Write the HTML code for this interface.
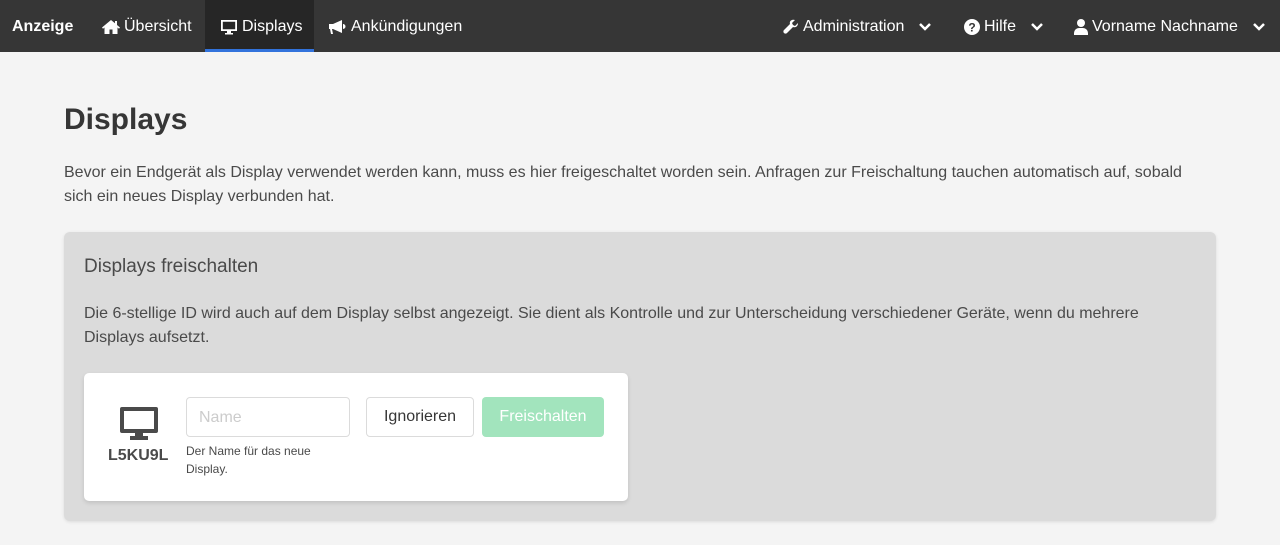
<!DOCTYPE html>
<html><head><meta charset="utf-8"><style>
*{box-sizing:border-box;margin:0;padding:0}
body{width:1280px;height:545px;background:#f4f4f4;font-family:"Liberation Sans",sans-serif;color:#363636;overflow:hidden}
nav{height:52px;background:#363636;color:#fff;position:relative;font-size:16px}
nav .it{position:absolute;top:0;height:52px;display:flex;align-items:center;gap:4px;padding-top:2px}
nav .act{background:#262626;border-bottom:3px solid #3273dc;padding-top:5px}
nav svg{fill:#fff}
nav .ch{margin-left:10px;fill:none;stroke:#fff;stroke-width:2.5}
h1{position:absolute;left:64px;top:103px;font-size:30px;font-weight:bold;color:#363636}
.p{position:absolute;left:64px;top:161px;width:1150px;font-size:16px;line-height:24px;color:#4a4a4a}
.box{position:absolute;left:64px;top:232px;width:1152px;height:289px;background:#dbdbdb;border-radius:6px;box-shadow:0 1px 3px rgba(0,0,0,.1)}
.box h2{position:absolute;left:20px;top:24px;font-size:19px;font-weight:normal;color:#4a4a4a}
.box .d{position:absolute;left:20px;top:70px;width:1100px;font-size:16px;line-height:24px;color:#4a4a4a}
.card{position:absolute;left:20px;top:141px;width:544px;height:128px;background:#fff;border-radius:5px;box-shadow:0 2px 4px rgba(0,0,0,.12)}
.inp{position:absolute;left:102px;top:24px;width:164px;height:40px;border:1px solid #dbdbdb;border-radius:4px;font-size:16px;color:#ccc;padding:11px 12px;line-height:18px}
.btn{position:absolute;top:24px;height:40px;border-radius:4px;font-size:16px;line-height:40px;text-align:center}
</style></head><body>
<nav>
<div class="it" style="left:12px;font-weight:bold">Anzeige</div>
<div class="it" style="left:102px"><svg width="18" height="16" viewBox="0 0 18 16"><path d="M9 1L0 8.5l1 1.2L2.5 8.5V15h5v-4.5h3V15h5V8.5l1.5 1.2 1-1.2-3-2.5V2h-2v2.3z"/></svg>Übersicht</div>
<div class="it act" style="left:205px;width:109px;padding-left:15px"><svg width="18" height="16" viewBox="0 0 18 16"><path d="M1 1h16v11H11v2h2v1.5H5V14h2v-2H1zM2.8 2.8v7.4h12.4V2.8z"/></svg>Displays</div>
<div class="it" style="left:329px"><svg width="18" height="16" viewBox="0 0 18 16"><path d="M0 5h4l9-4v13l-9-4H3l1 5H2L1 10H0zM14 5a2 2 0 010 5z"/></svg>Ankündigungen</div>
<div class="it" style="left:783px"><svg width="16" height="16" viewBox="0 0 16 16"><path d="M15 4l-3 3-2-1-1-2 3-3c-3-1-6 1-5 4L1 11a1.5 1.5 0 003 3l6-6c3 1 5-1 5-4z"/></svg>Administration<svg class="ch" width="14" height="10" viewBox="0 0 14 10"><path d="M2 2l5 5 5-5"/></svg></div>
<div class="it" style="left:964px"><svg width="16" height="16" viewBox="0 0 16 16"><circle cx="8" cy="8" r="8"/><text x="8" y="12.5" font-size="12" font-weight="bold" text-anchor="middle" fill="#363636">?</text></svg>Hilfe<svg class="ch" width="14" height="10" viewBox="0 0 14 10"><path d="M2 2l5 5 5-5"/></svg></div>
<div class="it" style="left:1074px"><svg width="14" height="16" viewBox="0 0 14 16"><circle cx="7" cy="4" r="4"/><path d="M0 16v-2a5 5 0 015-5h4a5 5 0 015 5v2z"/></svg>Vorname Nachname<svg class="ch" width="14" height="10" viewBox="0 0 14 10"><path d="M2 2l5 5 5-5"/></svg></div>
</nav>
<h1>Displays</h1>
<div class="p">Bevor ein Endgerät als Display verwendet werden kann, muss es hier freigeschaltet worden sein. Anfragen zur Freischaltung tauchen automatisch auf, sobald sich ein neues Display verbunden hat.</div>
<div class="box">
<h2>Displays freischalten</h2>
<div class="d">Die 6-stellige ID wird auch auf dem Display selbst angezeigt. Sie dient als Kontrolle und zur Unterscheidung verschiedener Geräte, wenn du mehrere Displays aufsetzt.</div>
<div class="card">
<svg style="position:absolute;left:36px;top:34px" width="38" height="34" viewBox="0 0 38 34"><path fill="#4a4a4a" d="M2 0h34a2 2 0 012 2v22a2 2 0 01-2 2H23v3h5v4H10v-4h5v-3H2a2 2 0 01-2-2V2a2 2 0 012-2zM4 4v18h30V4z"/></svg>
<div style="position:absolute;left:24px;top:74px;font-size:16px;font-weight:bold;color:#4a4a4a">L5KU9L</div>
<div class="inp">Name</div>
<div style="position:absolute;left:102px;top:69px;font-size:12px;line-height:18px;color:#4a4a4a;width:150px">Der Name für das neue Display.</div>
<div class="btn" style="left:282px;width:108px;border:1px solid #dbdbdb;color:#363636;line-height:38px">Ignorieren</div>
<div class="btn" style="left:398px;width:122px;background:#a2e4bd;color:#fff">Freischalten</div>
</div>
</div>
</body></html>
